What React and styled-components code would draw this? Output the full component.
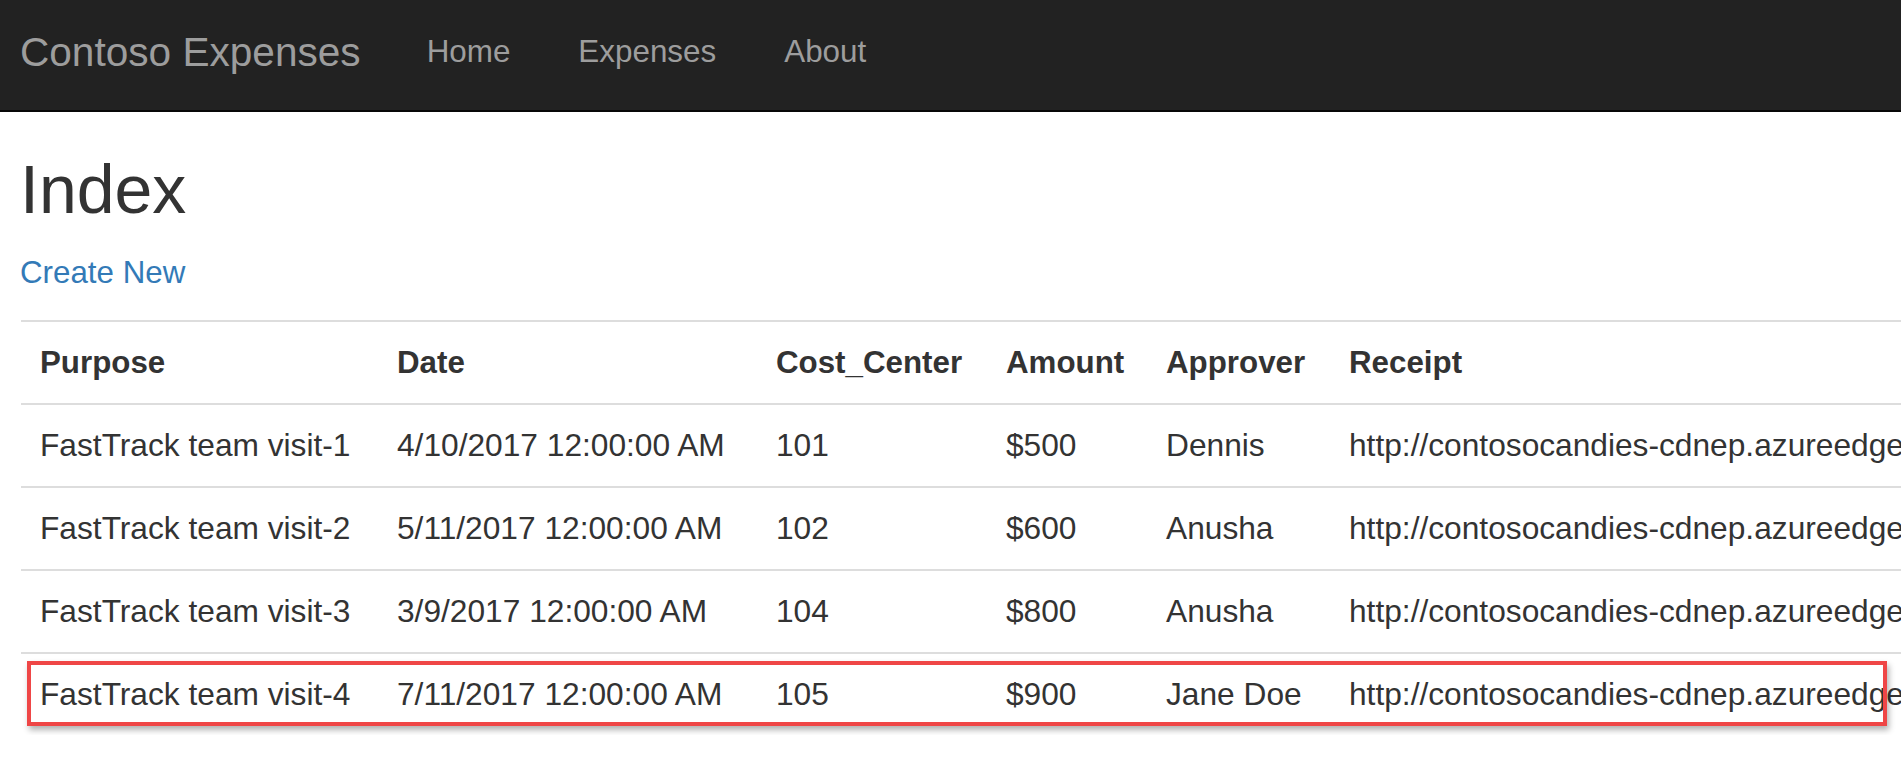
import React from 'react';
import styled, { createGlobalStyle } from 'styled-components';

const GlobalStyle = createGlobalStyle`
  html, body {
    margin: 0;
    padding: 0;
    overflow: hidden;
    background: #fff;
  }

  body {
    font-family: "Liberation Sans", Arial, sans-serif;
    color: #333;
  }
`;

const Navbar = styled.nav`
  height: 112px;
  box-sizing: border-box;
  background: #222;
  border-bottom: 2px solid #080808;
  display: flex;
  align-items: center;
  padding: 0 0 6px 20px;
`;

const Brand = styled.a`
  font-size: 40.6px;
  line-height: 44px;
  color: #9d9d9d;
  text-decoration: none;
  padding-right: 32px;
  white-space: nowrap;
`;

const NavLink = styled.a`
  font-size: 31.4px;
  line-height: 44px;
  color: #9d9d9d;
  text-decoration: none;
  padding: 0 34px;
  white-space: nowrap;
`;

const Main = styled.main`
  padding-left: 20px;
`;

const Title = styled.h2`
  margin: 40px 0 0;
  font-size: 68px;
  line-height: 75px;
  font-weight: 400;
  color: #333;
`;

const CreateLink = styled.a`
  display: inline-block;
  margin-top: 24px;
  font-size: 31.3px;
  line-height: 44px;
  color: #337ab7;
  text-decoration: none;
`;

const TableWrap = styled.div`
  position: relative;
  margin: 25px 0 0 1px;
`;

const Table = styled.table`
  border-collapse: collapse;
  table-layout: fixed;
  width: 2240px;
`;

const Cell = styled.td`
  padding: 18px 19px;
  line-height: 45px;
  border-top: 2px solid #ddd;
  white-space: nowrap;
  overflow: hidden;
  text-align: left;
  vertical-align: top;
  font-size: ${p => (p.$head ? '31.3px' : '31.7px')};
  font-weight: ${p => (p.$head ? 700 : 400)};
`;

const Highlight = styled.div`
  position: absolute;
  left: 6px;
  top: 341px;
  width: 1860px;
  height: 65px;
  box-sizing: border-box;
  border: 4px solid #ef4646;
  box-shadow: 2px 4px 6px rgba(0, 0, 0, 0.3);
  pointer-events: none;
`;

const widths = [357, 379, 230, 160, 183, 931];
const headers = ['Purpose', 'Date', 'Cost_Center', 'Amount', 'Approver', 'Receipt'];

const receipt = 'http://contosocandies-cdnep.azureedge.net/receipts/receipt.jpg';

const rows = [
  ['FastTrack team visit-1', '4/10/2017 12:00:00 AM', '101', '$500', 'Dennis', receipt],
  ['FastTrack team visit-2', '5/11/2017 12:00:00 AM', '102', '$600', 'Anusha', receipt],
  ['FastTrack team visit-3', '3/9/2017 12:00:00 AM', '104', '$800', 'Anusha', receipt],
  ['FastTrack team visit-4', '7/11/2017 12:00:00 AM', '105', '$900', 'Jane Doe', receipt],
];

export default function App() {
  return (
    <>
      <GlobalStyle />
      <Navbar>
        <Brand href="#">Contoso Expenses</Brand>
        <NavLink href="#">Home</NavLink>
        <NavLink href="#">Expenses</NavLink>
        <NavLink href="#">About</NavLink>
      </Navbar>
      <Main>
        <Title>Index</Title>
        <CreateLink href="#">Create New</CreateLink>
        <TableWrap>
          <Table>
            <colgroup>
              {widths.map((w, i) => (
                <col key={i} style={{ width: w }} />
              ))}
            </colgroup>
            <tbody>
              <tr>
                {headers.map(h => (
                  <Cell as="th" $head key={h}>{h}</Cell>
                ))}
              </tr>
              {rows.map((r, i) => (
                <tr key={i}>
                  {r.map((c, j) => (
                    <Cell key={j}>{c}</Cell>
                  ))}
                </tr>
              ))}
            </tbody>
          </Table>
          <Highlight />
        </TableWrap>
      </Main>
    </>
  );
}
